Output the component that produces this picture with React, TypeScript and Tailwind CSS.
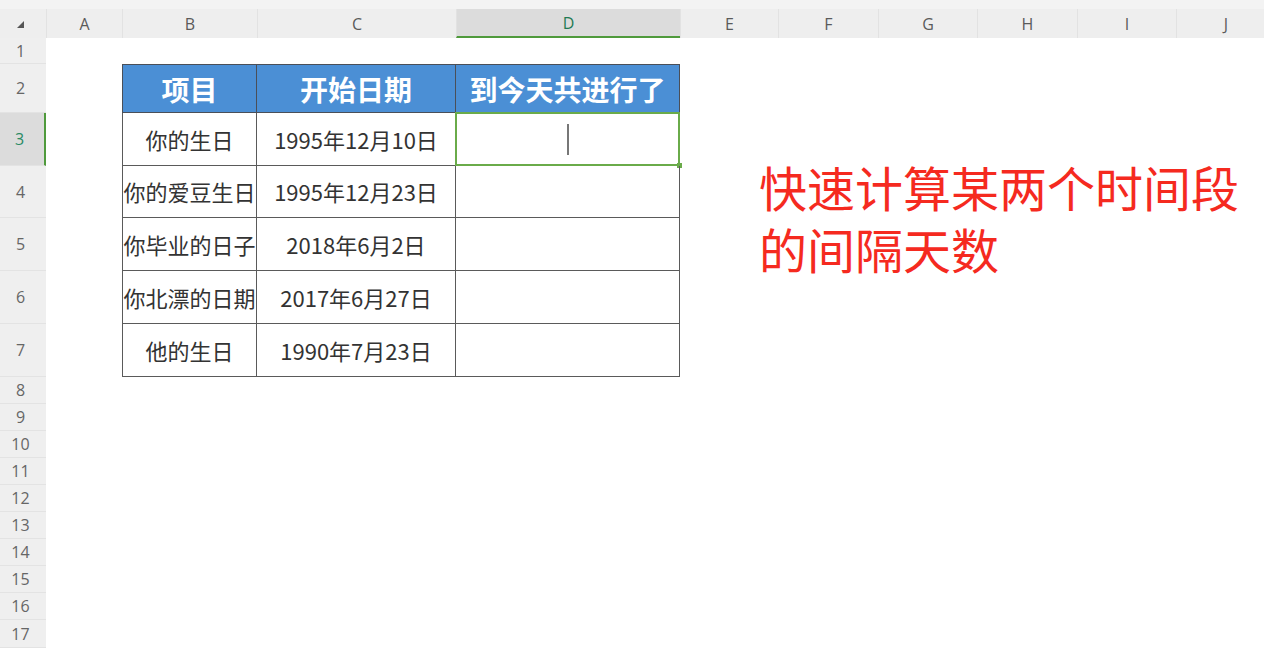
import React from "react";

const cols = [
  { key: "A", w: "w-[76px]" },
  { key: "B", w: "w-[135px]" },
  { key: "C", w: "w-[199px]" },
  { key: "D", w: "w-[224px]" },
  { key: "E", w: "w-[98px]" },
  { key: "F", w: "w-[100px]" },
  { key: "G", w: "w-[99px]" },
  { key: "H", w: "w-[100px]" },
  { key: "I", w: "w-[99px]" },
  { key: "J", w: "w-[99px]" },
];

const rowHeights: Record<number, string> = {
  1: "h-[26px]",
  2: "h-[49px]",
  3: "h-[53px]",
  4: "h-[52px]",
  5: "h-[53px]",
  6: "h-[53px]",
  7: "h-[53px]",
  17: "h-[28px]",
};
const rows = Array.from({ length: 17 }, (_, i) => ({ n: i + 1, h: rowHeights[i + 1] ?? "h-[27px]" }));

const data = [
  { item: "你的生日", start: "1995年12月10日" },
  { item: "你的爱豆生日", start: "1995年12月23日" },
  { item: "你毕业的日子", start: "2018年6月2日" },
  { item: "你北漂的日期", start: "2017年6月27日" },
  { item: "他的生日", start: "1990年7月23日" },
];

function ColumnHeader() {
  return (
    <div className="flex h-[38px] flex-col bg-[#f3f3f3]">
      <div className="h-[9px]" />
      <div className="flex flex-1 bg-[#eeeeee] font-['Open_Sans',sans-serif] text-[16px]">
        <div className="flex w-[46px] shrink-0 items-center justify-center pt-[2px] pr-[6px]">
          <svg width="9" height="9" viewBox="0 0 9 9">
            <polygon points="8,1 8,8 1,8" fill="#555" />
          </svg>
        </div>
        {cols.map((c) => (
          <div
            key={c.key}
            className={`flex shrink-0 items-center justify-center border-l border-[#e2e2e2] ${c.w} ${
              c.key === "D" ? "border-b-2 border-b-[#4f9a3c] bg-[#dcdcdc] text-[#1f7a54]" : "text-[#5a5a5a]"
            }`}
          >
            {c.key}
          </div>
        ))}
      </div>
    </div>
  );
}

function RowHeader({ n, h }: { n: number; h: string }) {
  const active = n === 3;
  return (
    <div
      className={`flex w-[46px] shrink-0 items-center justify-center border-b border-[#e3e3e3] pr-[5px] font-['Open_Sans',sans-serif] text-[16px] ${h} ${
        active ? "border-r-2 border-r-[#4f9a3c] bg-[#dcdcdc] text-[#2a8a64]" : "bg-[#efefef] text-[#666]"
      }`}
    >
      {n}
    </div>
  );
}

function TableCells({ n }: { n: number }) {
  if (n === 2) {
    const heads = ["项目", "开始日期", "到今天共进行了"];
    return (
      <>
        {heads.map((t, i) => (
          <div
            key={t}
            className={`flex shrink-0 items-center justify-center whitespace-nowrap border-t border-r border-b border-[#4a4f58] bg-[#4b8fd5] text-[28px] font-bold text-white ${cols[i + 1].w} ${
              i === 0 ? "border-l" : ""
            }`}
          >
            {t}
          </div>
        ))}
      </>
    );
  }
  const row = data[n - 3];
  if (!row) return null;
  return (
    <>
      <div className="flex w-[135px] shrink-0 items-center justify-center whitespace-nowrap border-r border-b border-l border-[#5a5a5a] text-[22px] text-[#333]">
        {row.item}
      </div>
      <div className="flex w-[199px] shrink-0 items-center justify-center whitespace-nowrap border-r border-b border-[#5a5a5a] text-[22px] text-[#333]">
        {row.start}
      </div>
      <div className="relative flex w-[224px] shrink-0 items-center justify-center border-r border-b border-[#5a5a5a]">
        {n === 3 && (
          <>
            <div className="absolute -top-px -right-px -bottom-px -left-px border-2 border-[#6aab4a]" />
            <div className="h-[31px] w-[2px] bg-[#777]" />
            <div className="absolute right-[-3px] bottom-[-3px] h-[5px] w-[5px] bg-[#6aab4a]" />
          </>
        )}
      </div>
    </>
  );
}

export default function App() {
  return (
    <div className="relative h-[648px] w-[1264px] overflow-hidden bg-white font-['Noto_Sans_CJK_SC','Noto_Sans',sans-serif]">
      <ColumnHeader />
      {rows.map((r) => (
        <div key={r.n} className={`flex ${r.h}`}>
          <RowHeader n={r.n} h={r.h} />
          <div className="w-[76px] shrink-0" />
          <TableCells n={r.n} />
        </div>
      ))}
      {/* floating text box over the sheet */}
      <div className="absolute top-[155px] left-[759px] text-[48px] leading-[62px] text-[#f52a1f]">
        <p>快速计算某两个时间段</p>
        <p>的间隔天数</p>
      </div>
    </div>
  );
}
